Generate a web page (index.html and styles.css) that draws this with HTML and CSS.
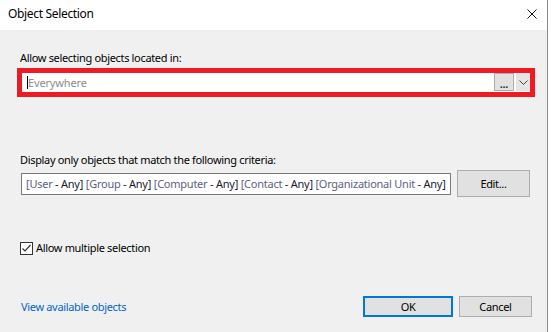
FILE: index.html
```html
<!DOCTYPE html>
<html lang="en">
<head>
  <meta charset="UTF-8" />
  <title>Object Selection</title>
  <link rel="stylesheet" href="styles.css">
</head>
<body>
  <div class="dialog">
    <div class="titlebar">
      <span class="title">Object Selection</span>
      <svg class="close" width="10" height="10" viewBox="0 0 10 10">
        <path d="M0.5 0.5 L9.5 9.5 M9.5 0.5 L0.5 9.5" stroke="#111" stroke-width="1" fill="none"/>
      </svg>
    </div>

    <div class="content">
      <div class="label">Allow selecting objects located in:</div>
      <div class="location">
        <div class="location-input"><span class="caret"></span><span class="placeholder">Everywhere</span></div>
        <div class="browse-btn">...</div>
        <div class="drop-btn">
          <svg width="9" height="5" viewBox="0 0 9 5">
            <path d="M0.5 0.5 L4.5 4.5 L8.5 0.5" stroke="#444" stroke-width="1" fill="none"/>
          </svg>
        </div>
      </div>

      <div class="label criteria-label">Display only objects that match the following criteria:</div>
      <div class="criteria-row">
        <div class="criteria">
          <span class="name">[User</span> - Any]
          <span class="name">[Group</span> - Any]
          <span class="name">[Computer</span> - Any]
          <span class="name">[Contact</span> - Any]
          <span class="name">[Organizational Unit</span> - Any]
        </div>
        <div class="btn edit-btn">Edit...</div>
      </div>

      <label class="check">
        <span class="box">
          <svg width="11" height="11" viewBox="0 0 11 11">
            <path d="M1.5 5.5 L4 8 L9.5 2" stroke="#333" stroke-width="1.2" fill="none"/>
          </svg>
        </span>
        Allow multiple selection
      </label>

      <div class="footer">
        <a class="link" href="#">View available objects</a>
        <div class="btn ok-btn">OK</div>
        <div class="btn cancel-btn">Cancel</div>
      </div>
    </div>
  </div>
</body>
</html>
```

FILE: styles.css
```css
/* Windows style dialog */
body {
  margin: 0;
  background: #fff;
  font-family: "Noto Sans", sans-serif;
  font-size: 11px;
  letter-spacing: -0.33px;
  color: #000;
}
.dialog {
  width: 547px;
  height: 332px;
  background: #f0f0f0;
  border-right: 1px solid #8a8a8a;
}
.titlebar {
  height: 30px;
  background: #fff;
  display: flex;
  align-items: center;
  justify-content: space-between;
  padding: 0 10px 0 8px;
}
.title {
  font-size: 12px;
  color: #000;
  margin-top: -4px;
}
.close {
  margin-top: -3px;
}
.content {
  padding: 20px 0 0 17px;
}
.label {
  line-height: 16px;
  padding-left: 3px;
  margin-bottom: 2px;
}
.location {
  width: 508px;
  height: 19px;
  border: 5px solid #ed1c24;
  background: #fff;
  display: flex;
  align-items: stretch;
}
.location-input {
  flex: 1;
  display: flex;
  align-items: center;
  padding-left: 5px;
}
.caret {
  width: 1px;
  height: 13px;
  background: #000;
}
.placeholder {
  color: #8c8c8c;
  letter-spacing: -0.15px;
}
.browse-btn {
  width: 18px;
  background: #e1e1e1;
  border: 1px solid #adadad;
  text-align: center;
  font-weight: bold;
  line-height: 19px;
  margin-bottom: 1px;
  color: #333;
}
.drop-btn {
  width: 14px;
  margin-left: 2px;
  margin-bottom: 1px;
  background: #e5e5e5;
  display: flex;
  align-items: center;
  justify-content: center;
}
.criteria-label {
  margin-top: 55px;
}
.criteria-row {
  display: flex;
  align-items: center;
  margin-left: 4px;
}
.criteria {
  width: 424px;
  height: 20px;
  border: 1px solid #7a7a7a;
  background: #fff;
  line-height: 20px;
  padding-left: 4px;
  white-space: nowrap;
  overflow: hidden;
  letter-spacing: -0.24px;
  color: #1a1a2e;
}
.criteria .name {
  color: #5e5e84;
}
.btn {
  background: #e1e1e1;
  border: 1px solid #adadad;
  text-align: center;
  box-sizing: border-box;
}
.edit-btn {
  width: 73px;
  height: 27px;
  line-height: 25px;
  margin-left: 6px;
}
.check {
  display: flex;
  align-items: center;
  margin: 43px 0 0 3px;
  line-height: 16px;
}
.box {
  width: 11px;
  height: 11px;
  border: 1px solid #333;
  background: #fff;
  margin-right: 3px;
  display: flex;
}
.footer {
  display: flex;
  align-items: center;
  margin-top: 40px;
  padding-left: 4px;
}
.link {
  color: #0066cc;
  text-decoration: none;
  margin-right: auto;
}
.ok-btn {
  width: 90px;
  height: 21px;
  line-height: 17px;
  border: 2px solid #0078d7;
}
.cancel-btn {
  width: 73px;
  height: 21px;
  line-height: 19px;
  margin-left: 6px;
  margin-right: 15px;
}
```
